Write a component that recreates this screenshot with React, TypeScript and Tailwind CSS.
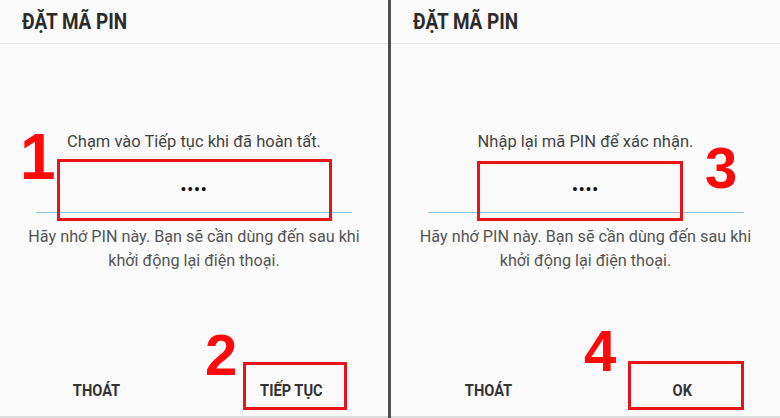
import React from "react";

const font = { fontFamily: "Roboto, 'Noto Sans', sans-serif" };

function Panel({ prompt }: { prompt: string; }) {
  return (
    <div className="flex flex-col h-full border-b-2 border-[#dcdcdc]">
      <div className="h-[44px] flex items-center pl-[22px] border-b border-[#e6e6e6] shrink-0">
        <span className="inline-block text-[22px] font-bold text-[#2b2b2b] scale-x-[0.86] origin-left whitespace-nowrap">ĐẶT MÃ PIN</span>
      </div>
      <div className="flex-1 flex flex-col items-center pt-[87px]">
        <div className="text-[16.5px] leading-[22px] text-[#444]">{prompt}</div>
        <div className="w-[316px] h-[60px] flex items-end justify-center border-b border-[#8dc3dc] pb-[14px]">
          <span className="text-[16px] leading-none text-[#111] font-bold tracking-[1px]">••••</span>
        </div>
        <div className="mt-[12px] text-[16.2px] leading-[24px] text-[#555] text-center whitespace-nowrap">
          <div>Hãy nhớ PIN này. Bạn sẽ cần dùng đến sau khi</div>
          <div>khởi động lại điện thoại.</div>
        </div>
        <div className="flex-1" />
      </div>
    </div>
  );
}

function Buttons({ right }: { right: string }) {
  const cls = "inline-block text-[17px] font-bold text-[#333] scale-x-[0.86] whitespace-nowrap";
  return (
    <div className="flex h-[50px] items-center">
      <div className="flex-1 text-center"><span className={cls}>THOÁT</span></div>
      <div className="flex-1 text-center"><span className={cls}>{right}</span></div>
    </div>
  );
}

export default function App() {
  const digit = "absolute text-[#ff0a0a] font-bold leading-none";
  const digitFont = { fontFamily: "'Liberation Sans', Arial, sans-serif" };
  return (
    <div className="relative w-[780px] h-[418px] bg-[#fafafa] flex overflow-hidden" style={font}>
      <div className="w-[388px] h-full relative">
        <Panel prompt="Chạm vào Tiếp tục khi đã hoàn tất." />
        <div className="absolute left-0 right-0 bottom-[2px]">
          <Buttons right="TIẾP TỤC" />
        </div>
      </div>
      <div className="w-[3px] h-full bg-[#505050]" />
      <div className="flex-1 h-full relative">
        <Panel prompt="Nhập lại mã PIN để xác nhận." />
        <div className="absolute left-0 right-0 bottom-[2px]">
          <Buttons right="OK" />
        </div>
      </div>

      <div className="absolute left-[57px] top-[159px] w-[275px] h-[62px] border-[3px] border-[#e8141c]" />
      <div className="absolute left-[243px] top-[362px] w-[104px] h-[48px] border-[3px] border-[#e8141c]" />
      <div className="absolute left-[477px] top-[161px] w-[206px] h-[60px] border-[3px] border-[#e8141c]" />
      <div className="absolute left-[628px] top-[361px] w-[116px] h-[49px] border-[3px] border-[#e8141c]" />

      <div className={digit + " left-[20px] top-[125px] text-[64px]"} style={digitFont}>1</div>
      <div className={digit + " left-[205px] top-[326px] text-[58px]"} style={digitFont}>2</div>
      <div className={digit + " left-[705px] top-[139px] text-[58px]"} style={digitFont}>3</div>
      <div className={digit + " left-[584px] top-[322px] text-[58px]"} style={digitFont}>4</div>
    </div>
  );
}
